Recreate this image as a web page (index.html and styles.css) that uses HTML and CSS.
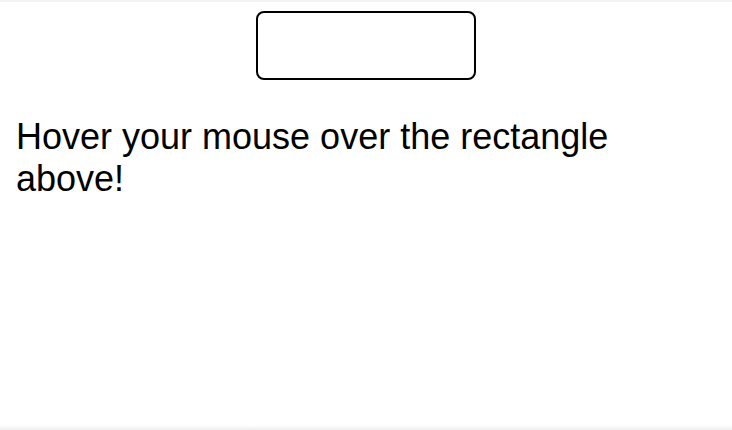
FILE: index.html
```html
<!DOCTYPE html>
<html lang="en">
<head>
<meta charset="utf-8">
<title>Hover</title>
<link rel="stylesheet" href="styles.css">
</head>
<body>
<div class="frame">
  <div class="target"></div>
  <p class="message">Hover your mouse over the rectangle above!</p>
</div>
</body>
</html>
```
FILE: styles.css
```css
html, body {
  margin: 0;
  padding: 0;
  background: #ffffff;
}
.frame {
  box-sizing: border-box;
  height: 430px;
  border-top: 2px solid #f2f2f2;
  padding: 9px 16px 0;
  font-family: "Liberation Sans", Arial, sans-serif;
  color: #000;
  background: linear-gradient(to bottom, #fff 0, #fff 423px, #e8e8e8 430px);
  overflow: hidden;
}
.target {
  box-sizing: border-box;
  width: 220px;
  height: 69px;
  margin: 0 auto;
  border: 2px solid #000;
  border-radius: 8px;
}
.message {
  margin: 36px 0 0;
  font-size: 36px;
  line-height: normal;
  max-width: 650px;
}
```
